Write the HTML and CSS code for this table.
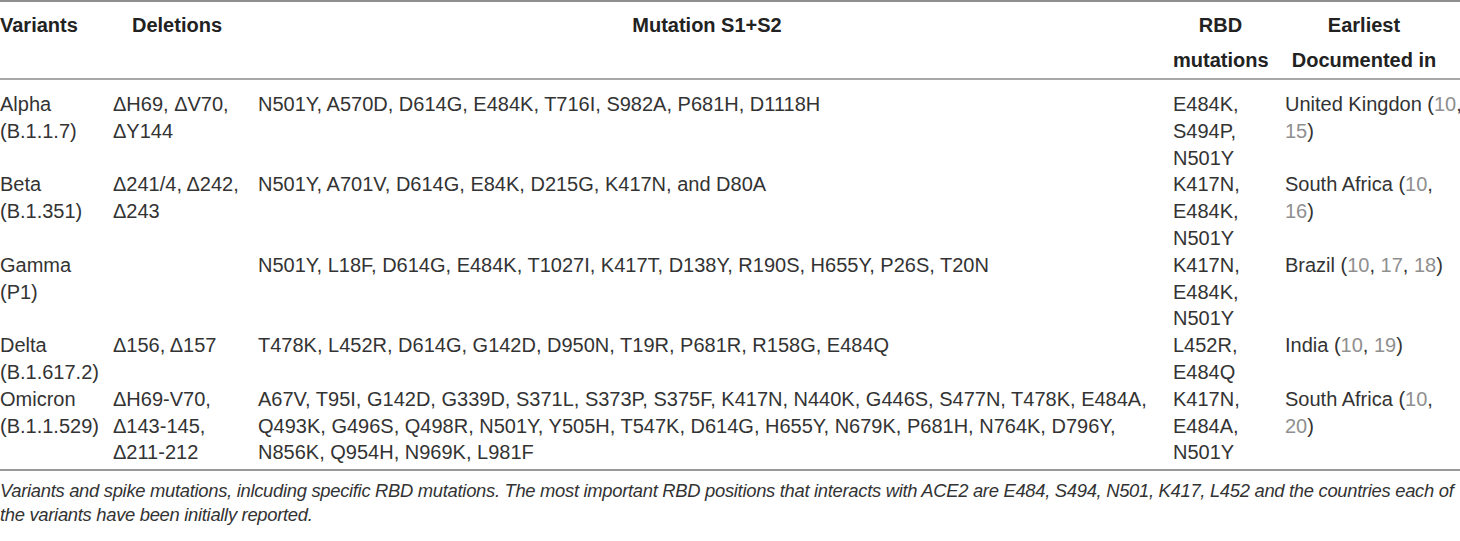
FILE: index.html
```html
<!DOCTYPE html>
<html lang="en">
<head>
<meta charset="utf-8">
<title>Variants and spike mutations</title>
<link rel="stylesheet" href="styles.css">
</head>
<body>
<div class="wrap">
  <table class="vt">
    <colgroup>
      <col class="c1"><col class="c2"><col class="c3"><col class="c4"><col class="c5">
    </colgroup>
    <thead>
      <tr>
        <th class="left">Variants</th>
        <th>Deletions</th>
        <th>Mutation S1+S2</th>
        <th>RBD<br>mutations</th>
        <th>Earliest<br>Documented in</th>
      </tr>
    </thead>
    <tbody>
      <tr>
        <td>Alpha<br>(B.1.1.7)</td>
        <td>ΔH69, ΔV70,<br>ΔY144</td>
        <td>N501Y, A570D, D614G, E484K, T716I, S982A, P681H, D1118H</td>
        <td>E484K,<br>S494P,<br>N501Y</td>
        <td>United Kingdon (<span class="ref">10</span>,<br><span class="ref">15</span>)</td>
      </tr>
      <tr>
        <td>Beta<br>(B.1.351)</td>
        <td>Δ241/4, Δ242,<br>Δ243</td>
        <td>N501Y, A701V, D614G, E84K, D215G, K417N, and D80A</td>
        <td>K417N,<br>E484K,<br>N501Y</td>
        <td>South Africa (<span class="ref">10</span>,<br><span class="ref">16</span>)</td>
      </tr>
      <tr>
        <td>Gamma<br>(P1)</td>
        <td></td>
        <td>N501Y, L18F, D614G, E484K, T1027I, K417T, D138Y, R190S, H655Y, P26S, T20N</td>
        <td>K417N,<br>E484K,<br>N501Y</td>
        <td>Brazil (<span class="ref">10</span>, <span class="ref">17</span>, <span class="ref">18</span>)</td>
      </tr>
      <tr>
        <td>Delta<br>(B.1.617.2)</td>
        <td>Δ156, Δ157</td>
        <td>T478K, L452R, D614G, G142D, D950N, T19R, P681R, R158G, E484Q</td>
        <td>L452R,<br>E484Q</td>
        <td>India (<span class="ref">10</span>, <span class="ref">19</span>)</td>
      </tr>
      <tr>
        <td>Omicron<br>(B.1.1.529)</td>
        <td>ΔH69-V70,<br>Δ143-145,<br>Δ211-212</td>
        <td>A67V, T95I, G142D, G339D, S371L, S373P, S375F, K417N, N440K, G446S, S477N, T478K, E484A,<br>Q493K, G496S, Q498R, N501Y, Y505H, T547K, D614G, H655Y, N679K, P681H, N764K, D796Y,<br>N856K, Q954H, N969K, L981F</td>
        <td>K417N,<br>E484A,<br>N501Y</td>
        <td>South Africa (<span class="ref">10</span>,<br><span class="ref">20</span>)</td>
      </tr>
    </tbody>
  </table>
  <p class="caption">Variants and spike mutations, inlcuding specific RBD mutations. The most important RBD positions that interacts with ACE2 are E484, S494, N501, K417, L452 and the countries each of<br>the variants have been initially reported.</p>
</div>
</body>
</html>
```

FILE: styles.css
```css
html, body {
  margin: 0;
  padding: 0;
  background: #ffffff;
}

body {
  font-family: "Liberation Sans", Arial, sans-serif;
  color: #333333;
}

.wrap {
  width: 1460px;
}

.vt {
  width: 1460px;
  border-collapse: collapse;
  table-layout: fixed;
  border-top: 2px solid #8e8e8e;
  border-bottom: 2px solid #9a9a9a;
}

.c1 { width: 113px; }
.c2 { width: 145px; }
.c3 { width: 915px; }
.c4 { width: 112px; }
.c5 { width: 175px; }

.vt th {
  font-weight: bold;
  font-size: 20px;
  line-height: 35px;
  color: #222222;
  text-align: center;
  vertical-align: top;
  padding: 6px 17px 0 0;
  border-bottom: 2px solid #a8a8a8;
  white-space: nowrap;
}

.vt th.left {
  text-align: left;
}

.vt td {
  font-size: 20px;
  line-height: 26.8px;
  vertical-align: top;
  text-align: left;
  padding: 0 17px 0 0;
  white-space: nowrap;
}

.vt tbody tr:first-child td {
  padding-top: 11px;
}

.vt tbody tr:last-child td {
  padding-bottom: 3px;
}

.ref {
  color: #8f8f8f;
}

.caption {
  margin: 0;
  padding-top: 8px;
  font-style: italic;
  font-size: 18.4px;
  line-height: 24px;
  color: #333333;
  letter-spacing: -0.3px;
  white-space: nowrap;
}
```
